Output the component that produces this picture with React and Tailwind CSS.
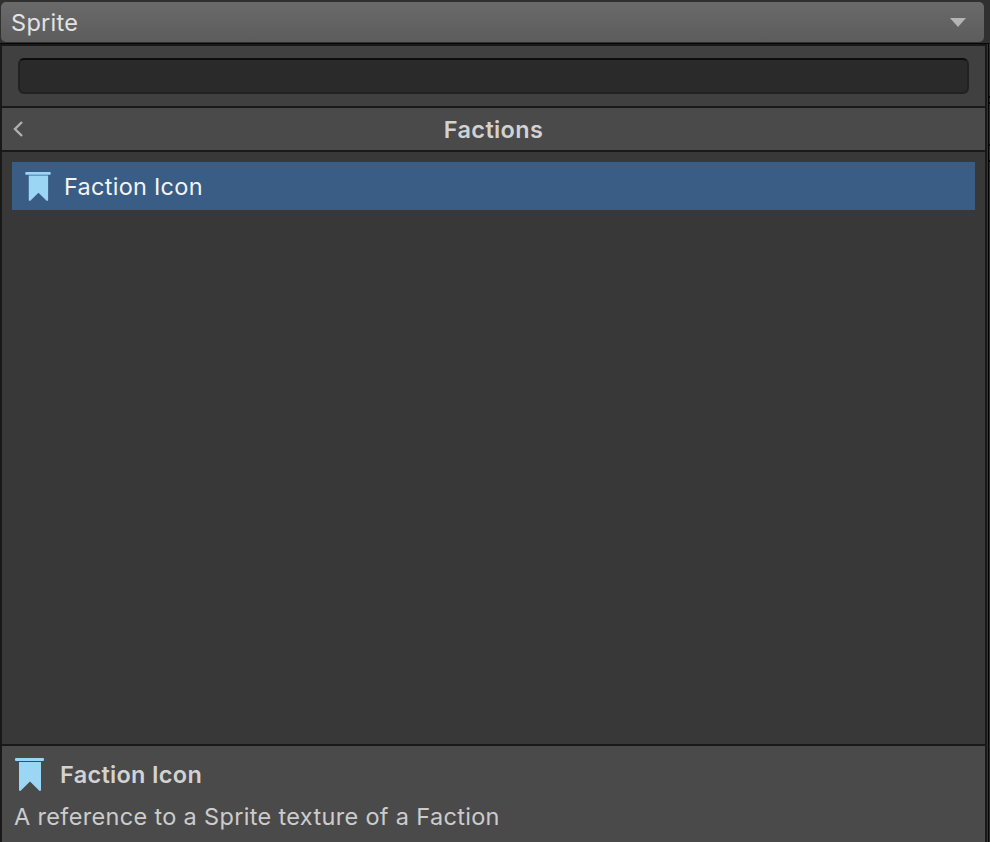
function FlagIcon({ className }) {
  return (
    <svg className={className} viewBox="0 0 29 33" fill="#9bd6f5">
      <rect x="0" y="0" width="29" height="3" rx="1" />
      <path d="M4 4H26V32.4L24.6 33L15 23.6L5.4 33L4 32.4Z" />
    </svg>
  );
}

function Dropdown() {
  return (
    <div className="h-[43px] shrink-0 bg-[#303030] pt-0.5 pr-1.5 pl-px">
      <div className="flex h-10 items-center justify-between rounded-[5px] bg-linear-to-b from-[#6a6a6a] to-[#5c5c5c] pr-[18px] pl-2.5">
        <span className="pt-px text-[23.5px] leading-10 tracking-[0.3px] text-[#e2e2e2]">Sprite</span>
        <svg className="h-[9px] w-4" viewBox="0 0 16 9" fill="#b4b4b4">
          <path d="M0 0H16L8 9Z" />
        </svg>
      </div>
    </div>
  );
}

// Sliver of the window behind the popup, with its row separators.
function BackdropEdge() {
  return (
    <div className="flex w-px flex-col bg-[#303030]">
      <div className="mt-[52px] h-0.5 bg-[#0a0a0a]" />
      <div className="mt-1 h-0.5 bg-[#0a0a0a]" />
      <div className="mt-10 h-0.5 bg-[#0a0a0a]" />
      <div className="mt-3.5 h-0.5 bg-[#0a0a0a]" />
    </div>
  );
}

export default function App() {
  return (
    <div className="flex h-[842px] w-[990px] flex-col overflow-hidden bg-[#323232] font-['Inter',sans-serif]">
      <Dropdown />
      <div className="h-px w-[989px] shrink-0 bg-[#050505]" />
      <div className="flex min-h-0 flex-1">
        <div className="flex w-[987px] flex-col border-x-2 border-t-2 border-[#191919] bg-[#383838]">
          <div className="h-[62px] shrink-0 border-b-2 border-[#191919] bg-[#404040] px-4 pt-3">
            <div className="h-9 rounded-md border-2 border-[#212121] border-t-[#0d0d0d] bg-[#2a2a2a]" />
          </div>
          <div className="grid h-11 shrink-0 grid-cols-[40px_1fr_40px] items-center border-b-2 border-[#191919] bg-[#4a4a4a]">
            <svg className="ml-[11px] h-4 w-2.5" viewBox="0 0 10 16" fill="none" stroke="#b0b0b0" strokeWidth="2.4">
              <path d="M9 1L2 8L9 15" />
            </svg>
            <h1 className="pt-px text-center text-[23.5px] leading-10 font-semibold tracking-[0.35px] text-[#d2d2d2]">Factions</h1>
          </div>
          <div className="flex-1 px-2.5 pt-2.5">
            <div className="flex h-12 items-center bg-[#3a5d85] pl-[13px]">
              <FlagIcon className="h-[29px] w-[26px]" />
              <span className="ml-[13px] pt-px text-[23.5px] tracking-[0.27px] text-[#f4f4f4]">Faction Icon</span>
            </div>
          </div>
          <div className="h-[98px] shrink-0 border-t-2 border-[#191919] bg-[#4a4a4a] pt-3 pl-[13px]">
            <div className="flex h-[33px] items-center">
              <FlagIcon className="h-[33px] w-[29px]" />
              <h2 className="ml-4 text-[23.5px] font-semibold tracking-[0.3px] text-[#d2d2d2]">Faction Icon</h2>
            </div>
            <p className="mt-2.5 -ml-px text-[23.5px] leading-8 tracking-[0.33px] text-[#cccccc]">A reference to a Sprite texture of a Faction</p>
          </div>
        </div>
        <div className="w-px bg-[#333333]" />
        <div className="w-px bg-[#050505]" />
        <BackdropEdge />
      </div>
    </div>
  );
}
